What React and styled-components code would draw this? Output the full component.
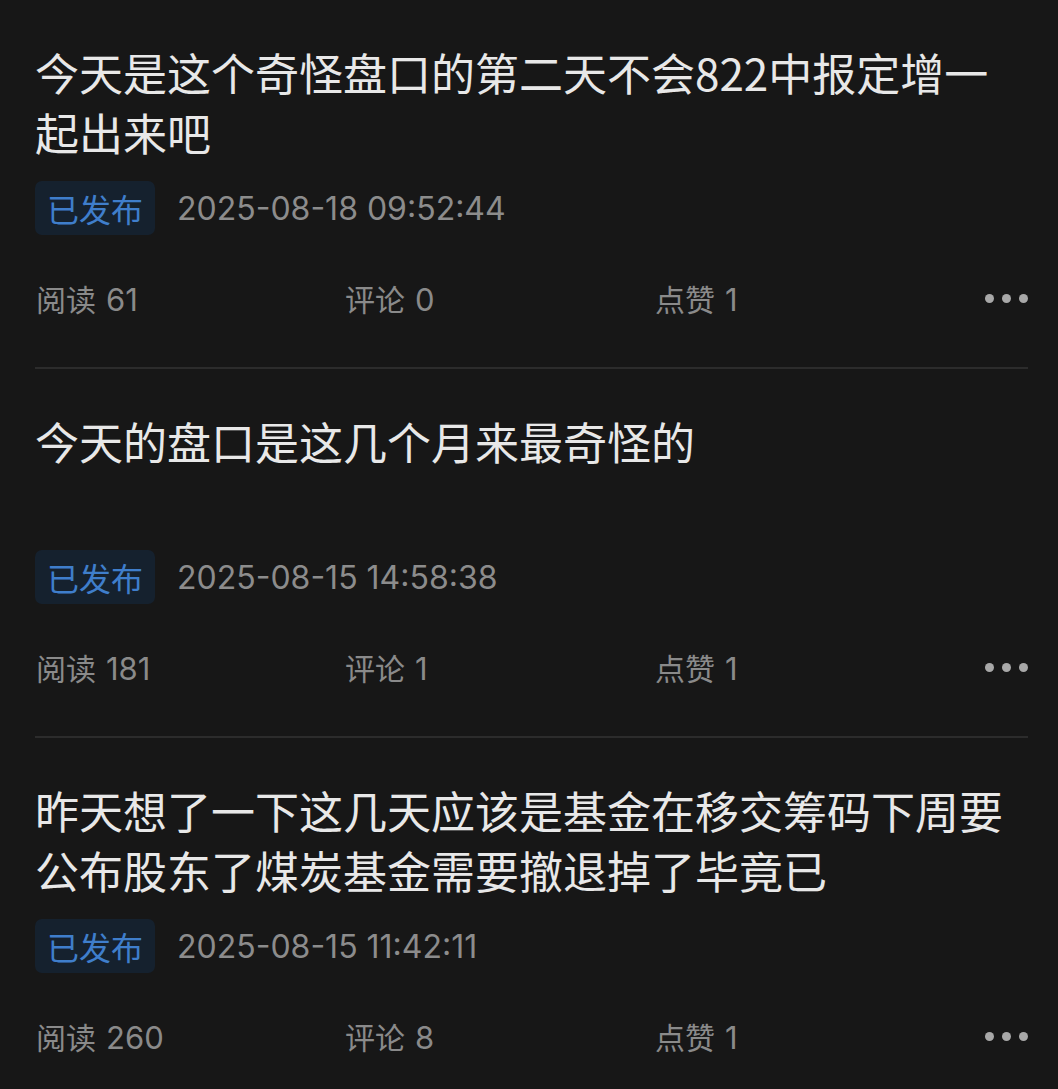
import React from "react";
import styled, { createGlobalStyle } from "styled-components";

const Global = createGlobalStyle`
  html, body { margin: 0; padding: 0; background: #171717; }
  body { font-family: "Noto Sans CJK SC", "Noto Sans", sans-serif; }
`;

const Page = styled.div`
  background: #171717;
  min-height: 1089px;
  padding: 0 30px 0 35px;
  box-sizing: border-box;
  overflow: hidden;
`;

const Item = styled.div`
  padding: 42px 0 51px;
  border-bottom: 2px solid ${(p) => (p.$last ? "transparent" : "#2c2c2c")};
`;

const Title = styled.div`
  font-size: 44px;
  line-height: 60px;
  min-height: 120px;
  color: #e8e8e8;
`;

const Meta = styled.div`
  display: flex;
  align-items: center;
  gap: 22px;
  margin-top: 19px;
`;

const Badge = styled.span`
  display: inline-flex;
  align-items: center;
  height: 54px;
  padding: 0 12px;
  border-radius: 7px;
  background: #15212e;
  color: #3f7ecb;
  font-size: 32px;
`;

const DateText = styled.span`
  font-family: Inter, "Noto Sans CJK SC", sans-serif;
  font-size: 32px;
  color: #8c8c8c;
`;

const Stats = styled.div`
  display: grid;
  grid-template-columns: 309px 310px 1fr auto;
  align-items: center;
  margin-top: 41px;
  height: 40px;
`;

const Stat = styled.span`
  font-family: Inter, "Noto Sans CJK SC", sans-serif;
  font-size: 31px;
  color: #8a8a8a;
  padding-left: 1px;
`;

const Label = styled.span`
  font-family: "Noto Sans CJK SC", sans-serif;
  font-size: 30px;
  margin-right: 10px;
`;

const Dots = styled.div`
  display: flex;
  gap: 8px;
  align-items: center;
`;

const Dot = styled.span`
  width: 9px;
  height: 9px;
  border-radius: 50%;
  background: #a8a8a8;
`;

const items = [
  {
    title: "今天是这个奇怪盘口的第二天不会822中报定增一起出来吧",
    date: "2025-08-18 09:52:44",
    read: 61,
    comment: 0,
    like: 1,
  },
  {
    title: "今天的盘口是这几个月来最奇怪的",
    date: "2025-08-15 14:58:38",
    read: 181,
    comment: 1,
    like: 1,
  },
  {
    title: "昨天想了一下这几天应该是基金在移交筹码下周要公布股东了煤炭基金需要撤退掉了毕竟已",
    date: "2025-08-15 11:42:11",
    read: 260,
    comment: 8,
    like: 1,
  },
];

export default function App() {
  return (
    <>
      <Global />
      <Page>
        {items.map((it, i) => (
          <Item key={i} $last={i === items.length - 1}>
            <Title>{it.title}</Title>
            <Meta>
              <Badge>已发布</Badge>
              <DateText>{it.date}</DateText>
            </Meta>
            <Stats>
              <Stat><Label>阅读</Label>{it.read}</Stat>
              <Stat><Label>评论</Label>{it.comment}</Stat>
              <Stat><Label>点赞</Label>{it.like}</Stat>
              <Dots>
                <Dot />
                <Dot />
                <Dot />
              </Dots>
            </Stats>
          </Item>
        ))}
      </Page>
    </>
  );
}
